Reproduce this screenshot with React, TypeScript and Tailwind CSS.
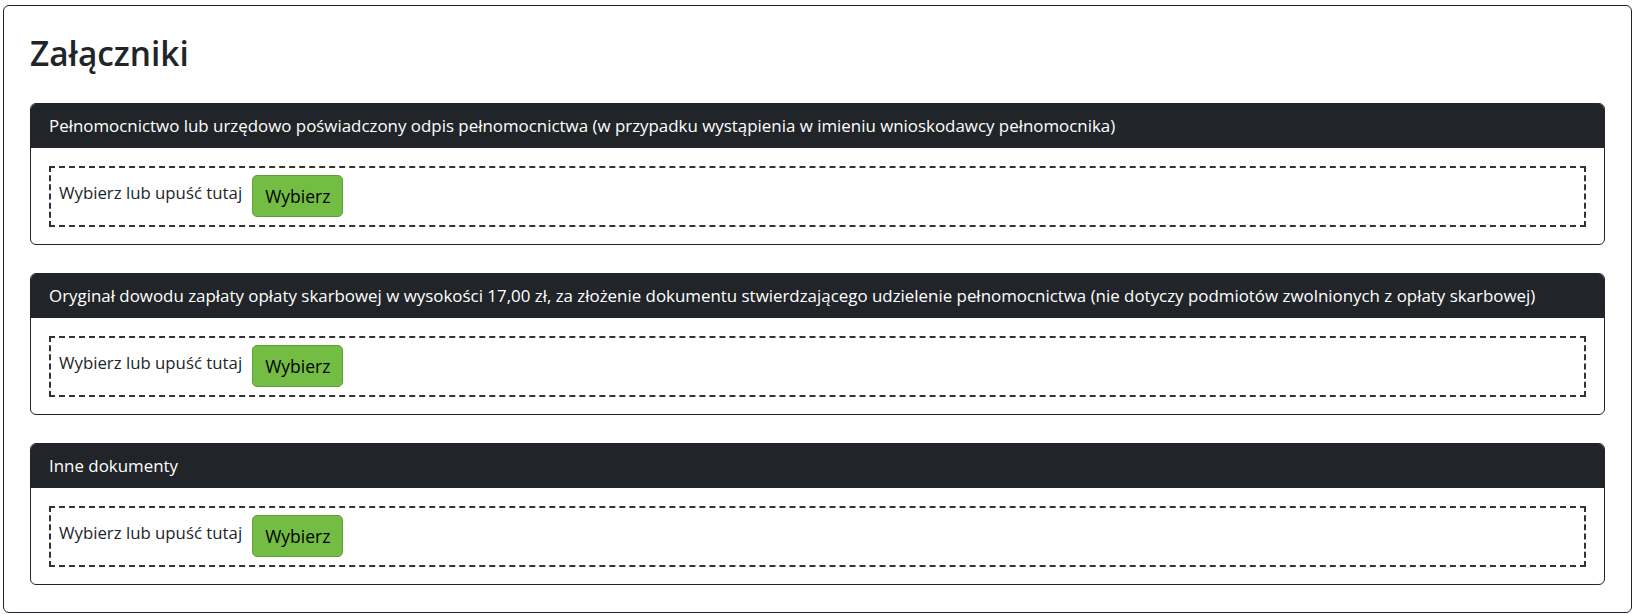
import React from "react";

const sections = [
  "Pełnomocnictwo lub urzędowo poświadczony odpis pełnomocnictwa (w przypadku wystąpienia w imieniu wnioskodawcy pełnomocnika)",
  "Oryginał dowodu zapłaty opłaty skarbowej w wysokości 17,00 zł, za złożenie dokumentu stwierdzającego udzielenie pełnomocnictwa (nie dotyczy podmiotów zwolnionych z opłaty skarbowej)",
  "Inne dokumenty",
];

export default function App() {
  return (
    <div
      className="bg-white pt-[5px] pl-[3px] pr-[2px] pb-[2px] text-[#212529]"
      style={{ fontFamily: '"Open Sans", "Noto Sans", sans-serif' }}
    >
      <div className="border border-[#212529] rounded-[6px] px-[26px] pt-[26px] pb-[27px]">
        <h2 className="text-[33.4px] leading-[42px] font-semibold mb-[29px]">Załączniki</h2>
        <div className="flex flex-col gap-[28px]">
          {sections.map((s) => (
            <div key={s} className="border border-[#212529] rounded-[6px] overflow-hidden">
              <div className="bg-[#212529] text-white px-[18px] h-[44px] flex items-center text-[16.9px]">
                {s}
              </div>
              <div className="px-[18px] py-[17.5px]">
                <div className="border-2 border-dashed border-[#333] h-[61px] px-[8px] flex items-center gap-[10px]">
                  <span className="text-[16.8px] -mt-[6px]">Wybierz lub upuść tutaj</span>
                  <button className="bg-[#73bd45] border border-[#5f9f3b] rounded-[5px] h-[42px] px-[12px] text-[17.5px] text-black">
                    Wybierz
                  </button>
                </div>
              </div>
            </div>
          ))}
        </div>
      </div>
    </div>
  );
}
